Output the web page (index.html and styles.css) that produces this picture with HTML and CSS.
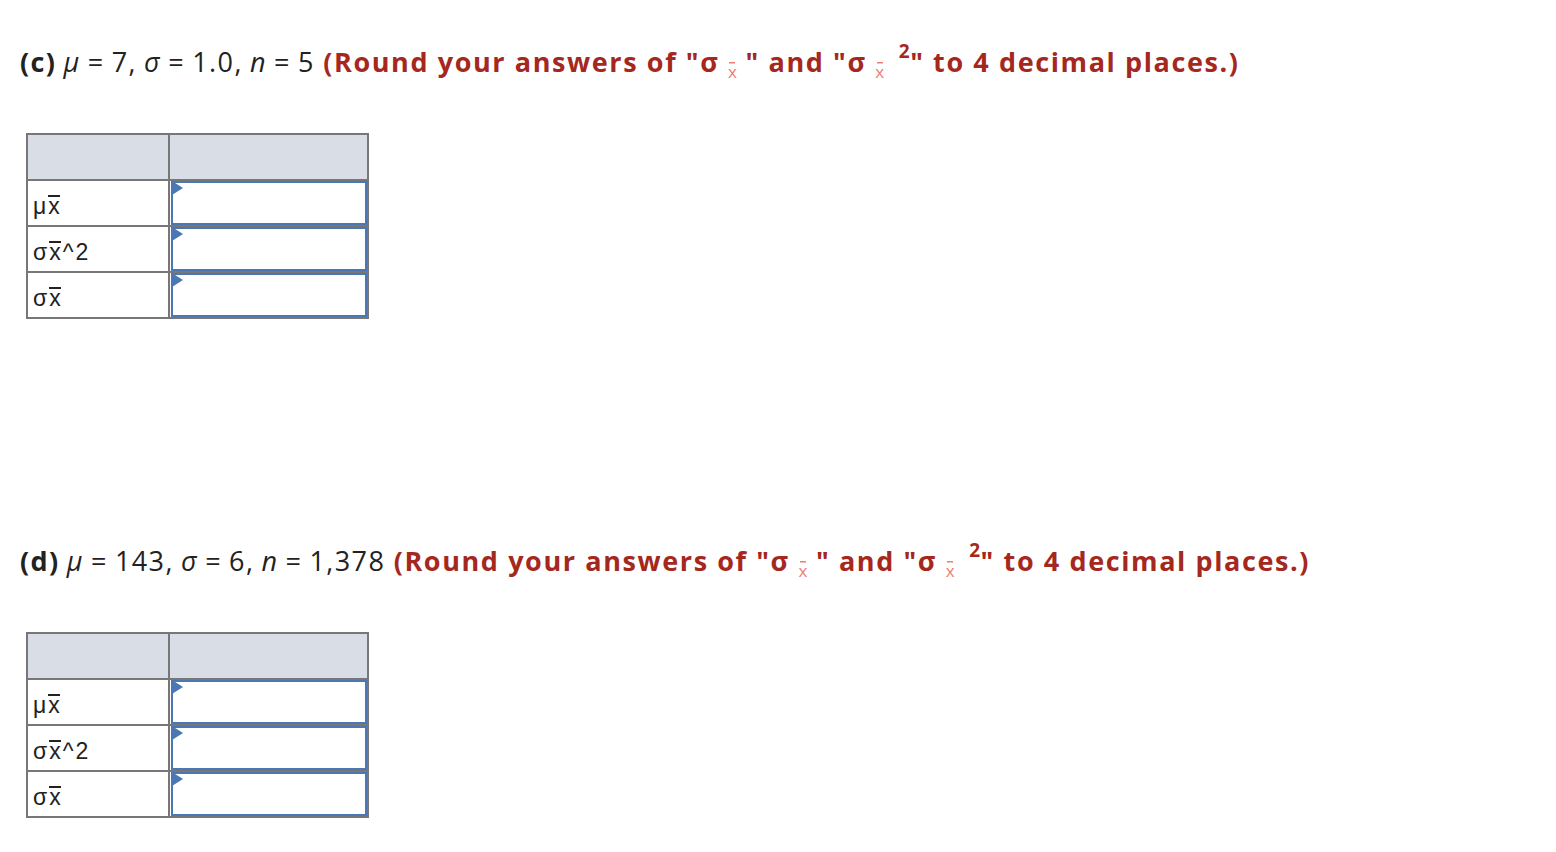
FILE: index.html
```html
<!DOCTYPE html>
<html>
<head>
<meta charset="utf-8">
<link rel="stylesheet" href="styles.css">
</head>
<body>
<div class="page">
  <section class="part part-c">
    <p class="prompt"><span class="given"><b class="label">(c)</b> <i>μ</i> = 7, <i>σ</i> = 1.0, <i>n</i> = 5</span> <span class="hint">(Round your answers of "σ <span class="sub"><span class="bar">x</span></span> " and "σ <span class="sub"><span class="bar">x</span></span> <sup>2</sup>" to 4 decimal places.)</span></p>
    <table class="grid">
      <tr class="head"><td class="c1"></td><td class="c2"></td></tr>
      <tr><td class="c1">μ<span class="ov">x</span></td><td class="c2"><div class="inp"></div></td></tr>
      <tr><td class="c1">σ<span class="ov">x</span>^2</td><td class="c2"><div class="inp"></div></td></tr>
      <tr><td class="c1">σ<span class="ov">x</span></td><td class="c2"><div class="inp"></div></td></tr>
    </table>
  </section>
  <section class="part part-d">
    <p class="prompt"><span class="given"><b class="label">(d)</b> <i>μ</i> = 143, <i>σ</i> = 6, <i>n</i> = 1,378</span> <span class="hint">(Round your answers of "σ <span class="sub"><span class="bar">x</span></span> " and "σ <span class="sub"><span class="bar">x</span></span> <sup>2</sup>" to 4 decimal places.)</span></p>
    <table class="grid">
      <tr class="head"><td class="c1"></td><td class="c2"></td></tr>
      <tr><td class="c1">μ<span class="ov">x</span></td><td class="c2"><div class="inp"></div></td></tr>
      <tr><td class="c1">σ<span class="ov">x</span>^2</td><td class="c2"><div class="inp"></div></td></tr>
      <tr><td class="c1">σ<span class="ov">x</span></td><td class="c2"><div class="inp"></div></td></tr>
    </table>
  </section>
</div>
</body>
</html>
```
FILE: styles.css
```css
html, body { margin: 0; padding: 0; background: #fff; }
.page { padding: 40px 0 0 20px; font-family: "Open Sans", "Lato", sans-serif; color: #222; }
.prompt { margin: 0; height: 44px; font-size: 27px; line-height: 44px; letter-spacing: 1.4px; white-space: nowrap; }
.given { word-spacing: -1.3px; }
.prompt i { font-style: italic; }
.label { font-weight: 700; }
.hint { color: #a5281e; font-weight: 700; letter-spacing: 1.6px; }
.hint .sub { color: #f07b6e; font-size: 17px; font-weight: 400; letter-spacing: 0; line-height: 0; vertical-align: -6px; }
.hint .bar { background: linear-gradient(#f07b6e, #f07b6e) no-repeat; background-size: 6px 1.5px; background-position: 50% 2px; }
.hint sup { font-size: 19px; vertical-align: 14px; line-height: 0; letter-spacing: 0.5px; margin-left: 6px; }
.grid { border-collapse: collapse; margin: 49px 0 0 6px; font-family: "Liberation Sans", Arial, sans-serif; font-size: 23px; color: #222; letter-spacing: 2px; }
.grid td { border: 2px solid #777; padding: 0; }
.grid .c1 { width: 135px; height: 38px; padding: 6px 0 0 5px; vertical-align: middle; }
.grid .c2 { width: 197px; height: 44px; }
.grid .head td { background: #d9dde5; height: 44px; padding: 0; }
.ov { background: linear-gradient(#222, #222) no-repeat; background-size: calc(100% - 2px) 2px; background-position: 0 2px; }
.inp { position: relative; height: 40px; border: 2px solid #4b78b5; margin-left: 1px; }
.inp::before { content: ""; position: absolute; left: -1px; top: -2px; border-left: 11px solid #4b78b5; border-top: 7px solid transparent; border-bottom: 7px solid transparent; }
.part-d { margin-top: 220px; }
```
